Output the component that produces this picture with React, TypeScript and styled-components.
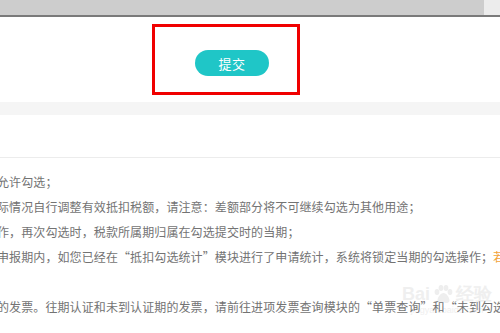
import styled, { createGlobalStyle } from 'styled-components';

const GlobalStyle = createGlobalStyle`
  html, body {
    margin: 0;
    padding: 0;
    background: #ffffff;
  }
  body {
    font-family: "Noto Sans CJK SC", "Noto Sans", sans-serif;
  }
`;

const Page = styled.div`
  position: relative;
  width: 500px;
  height: 333px;
  overflow: hidden;
  background: #ffffff;
`;

const ScrollBar = styled.div`
  display: flex;
  height: 15px;
  border-bottom: 2px solid #7a7a7a;
`;

const ScrollThumb = styled.div`
  flex: 1;
  background: #cdcdcd;
`;

const ScrollTrack = styled.div`
  width: 16px;
  background: #ececec;
`;

const SubmitArea = styled.div`
  display: flex;
  justify-content: center;
  align-items: center;
  height: 85px;
`;

const SubmitButton = styled.button`
  width: 74px;
  height: 26px;
  margin-right: 36px;
  margin-top: 7px;
  border: none;
  border-radius: 13px;
  background: #1fc6c7;
  color: #ffffff;
  font-family: "Noto Sans CJK SC", sans-serif;
  font-size: 13px;
  letter-spacing: 0.5px;
  cursor: pointer;
`;

const Highlight = styled.div`
  position: absolute;
  left: 152px;
  top: 24px;
  width: 142px;
  height: 65px;
  border: 3px solid #f00000;
`;

const GreyBand = styled.div`
  height: 13px;
  background: #f5f5f5;
`;

const Spacer = styled.div`
  height: 42px;
  border-bottom: 1px solid #ececec;
`;

const Notes = styled.div`
  position: relative;
  z-index: 1;
  padding-top: 11px;
  margin-left: -3px;
  white-space: nowrap;
`;

const NoteLine = styled.div`
  height: 25px;
  line-height: 25px;
  font-size: 12px;
  letter-spacing: 0.1px;
  color: #737373;
`;

const Warn = styled.span`
  color: #f2a33a;
`;

const Watermark = styled.div`
  position: absolute;
  z-index: 0;
  left: 402px;
  top: 284px;
  display: flex;
  flex-direction: column;
  align-items: center;
  color: #efefef;
  font-family: "Liberation Sans", sans-serif;
  pointer-events: none;
`;

const MarkTitle = styled.div`
  display: flex;
  align-items: center;
  gap: 2px;
  font-size: 18px;
  font-weight: bold;
  line-height: 20px;
`;

const MarkUrl = styled.div`
  font-size: 9px;
  line-height: 12px;
`;

const notes = [
  '允许勾选；',
  '际情况自行调整有效抵扣税额，请注意：差额部分将不可继续勾选为其他用途；',
  '作，再次勾选时，税款所属期归属在勾选提交时的当期；',
];

const Paw = () => (
  <svg width="22" height="20" viewBox="0 0 22 20" fill="#eeeeee">
    <ellipse cx="5" cy="8" rx="2.4" ry="3" />
    <ellipse cx="9" cy="4" rx="2.4" ry="3" />
    <ellipse cx="14" cy="4" rx="2.4" ry="3" />
    <ellipse cx="18" cy="8" rx="2.4" ry="3" />
    <path d="M11.5 9c-3 0-6 4.5-6 7.5 0 2 1.8 2.5 3 2.5 1.2 0 2-.6 3-.6s1.8.6 3 .6c1.2 0 3-.5 3-2.5 0-3-3-7.5-6-7.5z" />
  </svg>
);

const App = () => {
  return (
    <Page>
      <GlobalStyle />
      <ScrollBar>
        <ScrollThumb />
        <ScrollTrack />
      </ScrollBar>
      <SubmitArea>
        <SubmitButton>提交</SubmitButton>
      </SubmitArea>
      <GreyBand />
      <Spacer />
      <Watermark>
        <MarkTitle>
          Bai
          <Paw />
          经验
        </MarkTitle>
        <MarkUrl>jingyan.baidu.com</MarkUrl>
      </Watermark>
      <Notes>
        {notes.map((n) => (
          <NoteLine key={n}>{n}</NoteLine>
        ))}
        <NoteLine>
          申报期内，如您已经在“抵扣勾选统计”模块进行了申请统计，系统将锁定当期的勾选操作；<Warn>若需</Warn>
        </NoteLine>
        <NoteLine />
        <NoteLine>
          的发票。往期认证和未到认证期的发票，请前往进项发票查询模块的“单票查询”和“未到勾选期发票”
        </NoteLine>
      </Notes>
      <Highlight />
    </Page>
  );
};

export default App;
